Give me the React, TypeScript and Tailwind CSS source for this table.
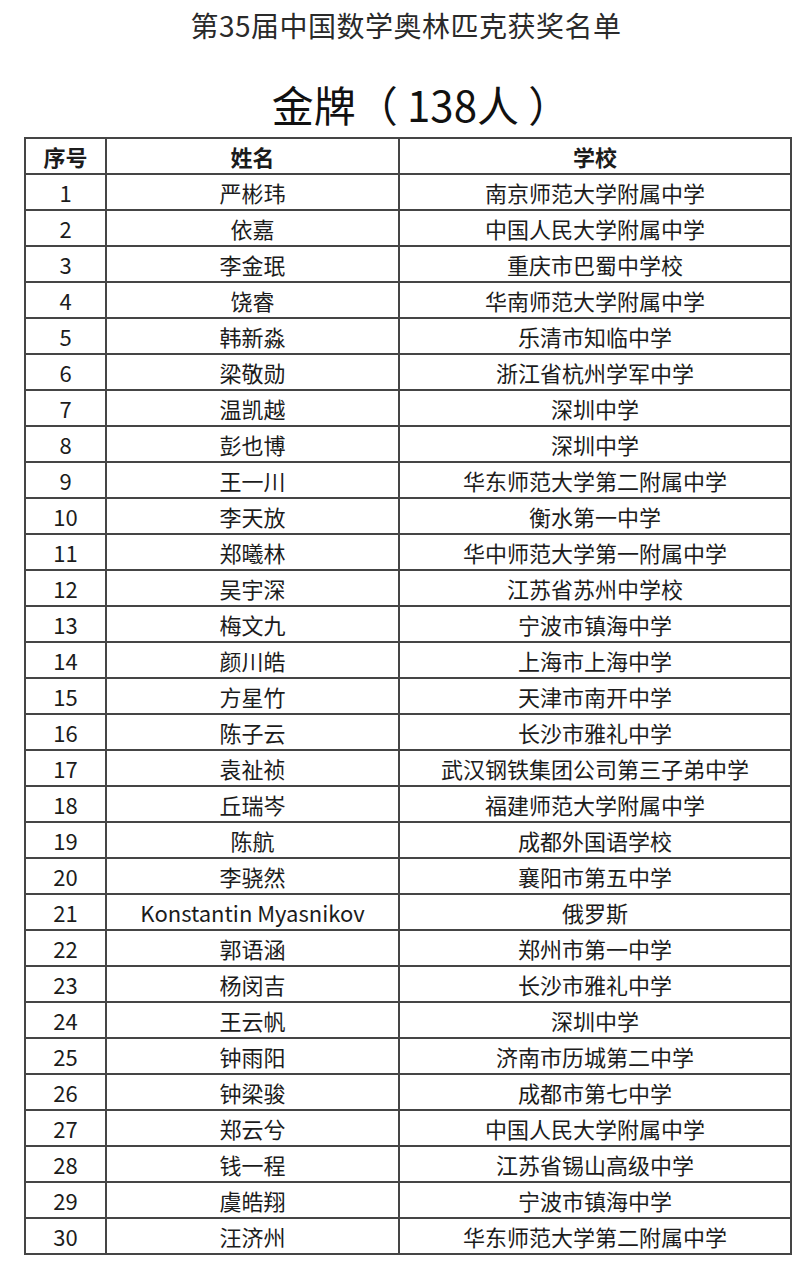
const rows: [string, string][] = [
  ['严彬玮', '南京师范大学附属中学'],
  ['依嘉', '中国人民大学附属中学'],
  ['李金珉', '重庆市巴蜀中学校'],
  ['饶睿', '华南师范大学附属中学'],
  ['韩新淼', '乐清市知临中学'],
  ['梁敬勋', '浙江省杭州学军中学'],
  ['温凯越', '深圳中学'],
  ['彭也博', '深圳中学'],
  ['王一川', '华东师范大学第二附属中学'],
  ['李天放', '衡水第一中学'],
  ['郑曦林', '华中师范大学第一附属中学'],
  ['吴宇深', '江苏省苏州中学校'],
  ['梅文九', '宁波市镇海中学'],
  ['颜川皓', '上海市上海中学'],
  ['方星竹', '天津市南开中学'],
  ['陈子云', '长沙市雅礼中学'],
  ['袁祉祯', '武汉钢铁集团公司第三子弟中学'],
  ['丘瑞岑', '福建师范大学附属中学'],
  ['陈航', '成都外国语学校'],
  ['李骁然', '襄阳市第五中学'],
  ['Konstantin Myasnikov', '俄罗斯'],
  ['郭语涵', '郑州市第一中学'],
  ['杨闵吉', '长沙市雅礼中学'],
  ['王云帆', '深圳中学'],
  ['钟雨阳', '济南市历城第二中学'],
  ['钟梁骏', '成都市第七中学'],
  ['郑云兮', '中国人民大学附属中学'],
  ['钱一程', '江苏省锡山高级中学'],
  ['虞皓翔', '宁波市镇海中学'],
  ['汪济州', '华东师范大学第二附属中学'],
];

const cell = 'border-2 border-[#454545] text-center align-middle p-0';

export default function App() {
  return (
    <div
      className="w-[812px] h-[1261px] bg-white text-[#1c1c1c]"
      style={{ fontFamily: '"Noto Sans CJK SC", "Noto Sans", sans-serif' }}
    >
      <h1 className="pt-[7px] text-center text-[28px] leading-[36px] tracking-[0.5px] text-[#2a2a2a]">
        第35届中国数学奥林匹克获奖名单
      </h1>
      <h2 className="mt-[33px] pl-[30px] text-center text-[42px] leading-[56px] text-[#111] whitespace-pre">
        金牌（ 138人 ）
      </h2>

      <table className="mt-[5px] ml-[24px] w-[766px] table-fixed border-collapse">
        <colgroup>
          <col className="w-[81px]" />
          <col className="w-[293px]" />
          <col className="w-[392px]" />
        </colgroup>
        <thead>
          <tr className="h-[36px] text-[22px] leading-[32px] font-bold">
            <th className={cell}>序号</th>
            <th className={cell}>姓名</th>
            <th className={cell}>学校</th>
          </tr>
        </thead>
        <tbody>
          {rows.map(([name, school], i) => (
            <tr key={i} className="h-[36px] text-[22px] leading-[32px]">
              <td className={cell}>{i + 1}</td>
              <td className={cell}>{name}</td>
              <td className={cell}>{school}</td>
            </tr>
          ))}
        </tbody>
      </table>
    </div>
  );
}
